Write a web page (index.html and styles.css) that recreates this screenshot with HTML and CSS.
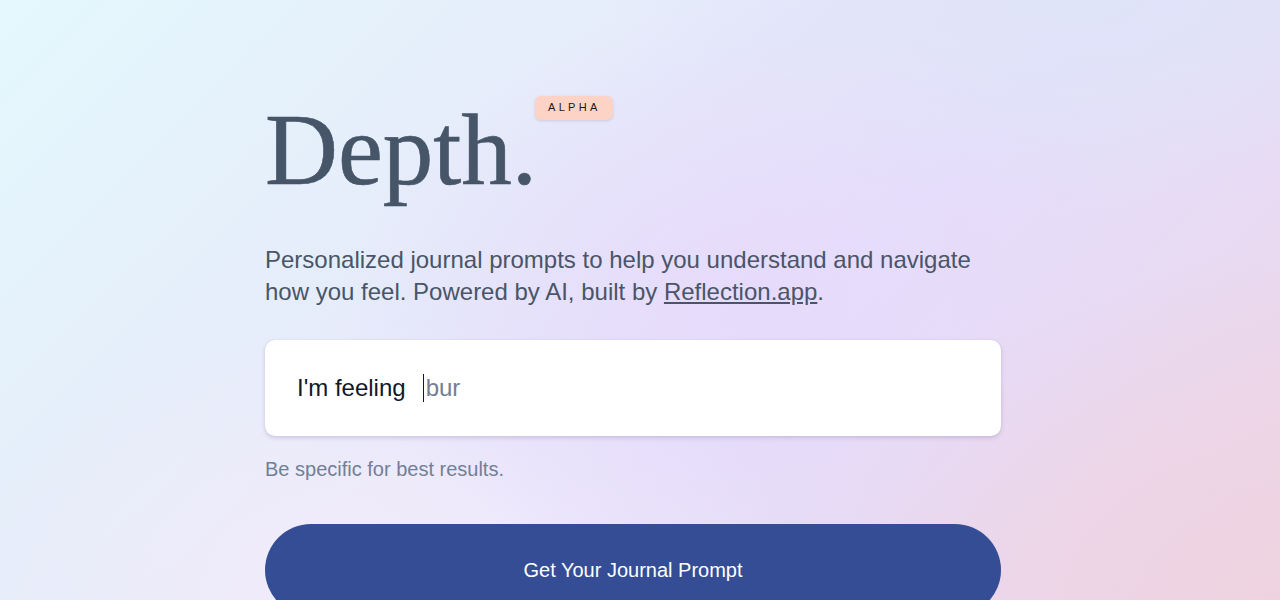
FILE: index.html
```html
<!DOCTYPE html>
<html lang="en">
<head>
<meta charset="utf-8">
<title>Depth.</title>
<link rel="stylesheet" href="styles.css">
</head>
<body>
<main class="page">
  <div class="content">
    <header class="brand">
      <h1 class="logo">Depth.<span class="badge">ALPHA</span></h1>
    </header>
    <p class="intro">Personalized journal prompts to help you understand and navigate how you feel. Powered by AI, built by <a href="#" class="link">Reflection.app</a>.</p>
    <div class="field">
      <label class="field-label" for="feel">I'm feeling</label>
      <span class="caret"></span>
      <input id="feel" class="field-input" type="text" placeholder="bur">
    </div>
    <p class="hint">Be specific for best results.</p>
    <button class="cta" type="button">Get Your Journal Prompt</button>
  </div>
</main>
</body>
</html>
```
FILE: styles.css
```css
html, body {
  margin: 0;
  padding: 0;
  height: 100%;
}
body {
  font-family: "Liberation Sans", Arial, sans-serif;
  background:
    radial-gradient(ellipse 700px 500px at 1280px 600px, rgba(238, 210, 224, 0.95), rgba(238, 210, 224, 0) 70%),
    radial-gradient(ellipse 600px 420px at 760px 300px, rgba(231, 218, 251, 0.9), rgba(231, 218, 251, 0) 70%),
    radial-gradient(ellipse 600px 400px at 380px 600px, rgba(245, 238, 251, 0.95), rgba(245, 238, 251, 0) 70%),
    radial-gradient(ellipse 700px 300px at 1100px 0px, rgba(222, 228, 248, 0.9), rgba(222, 228, 248, 0) 70%),
    linear-gradient(135deg, #e4f8fd 0%, #e6ecfa 35%, #e4dffb 60%, #ead9ef 85%, #efd6e2 100%);
  overflow: hidden;
}
.page {
  padding-right: 14px;
}
.content {
  width: 736px;
  margin: 0 auto;
  padding-top: 100px;
}
.brand {
  display: flex;
}
.logo {
  position: relative;
  margin: 0;
  font-family: "Liberation Serif", "Times New Roman", serif;
  font-weight: 400;
  font-size: 101px;
  line-height: 100px;
  color: #475569;
  -webkit-text-stroke: 0.6px #475569;
}
.badge {
  position: absolute;
  left: 270px;
  top: -4px;
  padding: 5px 12px 6px 13px;
  font-family: "Liberation Sans", Arial, sans-serif;
  font-size: 11px;
  line-height: 13px;
  letter-spacing: 3.3px;
  color: #1a1a1a;
  background: #fdd3c6;
  border-radius: 6px;
  box-shadow: 0 1px 3px rgba(0, 0, 0, 0.12);
  -webkit-text-stroke: 0;
}
.intro {
  margin: 44px 0 0;
  font-size: 24px;
  line-height: 32px;
  color: #4a5568;
}
.link {
  color: #4a5568;
  text-decoration: underline;
}
.field {
  margin-top: 32px;
  height: 96px;
  display: flex;
  align-items: center;
  padding: 0 32px;
  background: #fff;
  border-radius: 10px;
  box-shadow: 0 2px 4px rgba(120, 90, 150, 0.25), 0 0 1px rgba(0,0,0,0.1);
  box-sizing: border-box;
}
.field-label {
  font-size: 24px;
  color: #111827;
  margin-right: 17px;
}
.caret {
  width: 1px;
  height: 28px;
  background: #111827;
}
.field-input {
  flex: 1;
  border: 0;
  outline: 0;
  padding: 0 0 0 2px;
  font-family: "Liberation Sans", Arial, sans-serif;
  font-size: 24px;
  color: #111827;
  background: transparent;
}
.field-input::placeholder {
  color: #718096;
}
.hint {
  margin: 19px 0 0;
  font-size: 20px;
  line-height: 28px;
  color: #718096;
}
.cta {
  display: block;
  width: 100%;
  margin-top: 41px;
  height: 92px;
  border: 0;
  border-radius: 46px;
  background: #344d94;
  color: #fff;
  font-family: "Liberation Sans", Arial, sans-serif;
  font-size: 20px;
}
```
